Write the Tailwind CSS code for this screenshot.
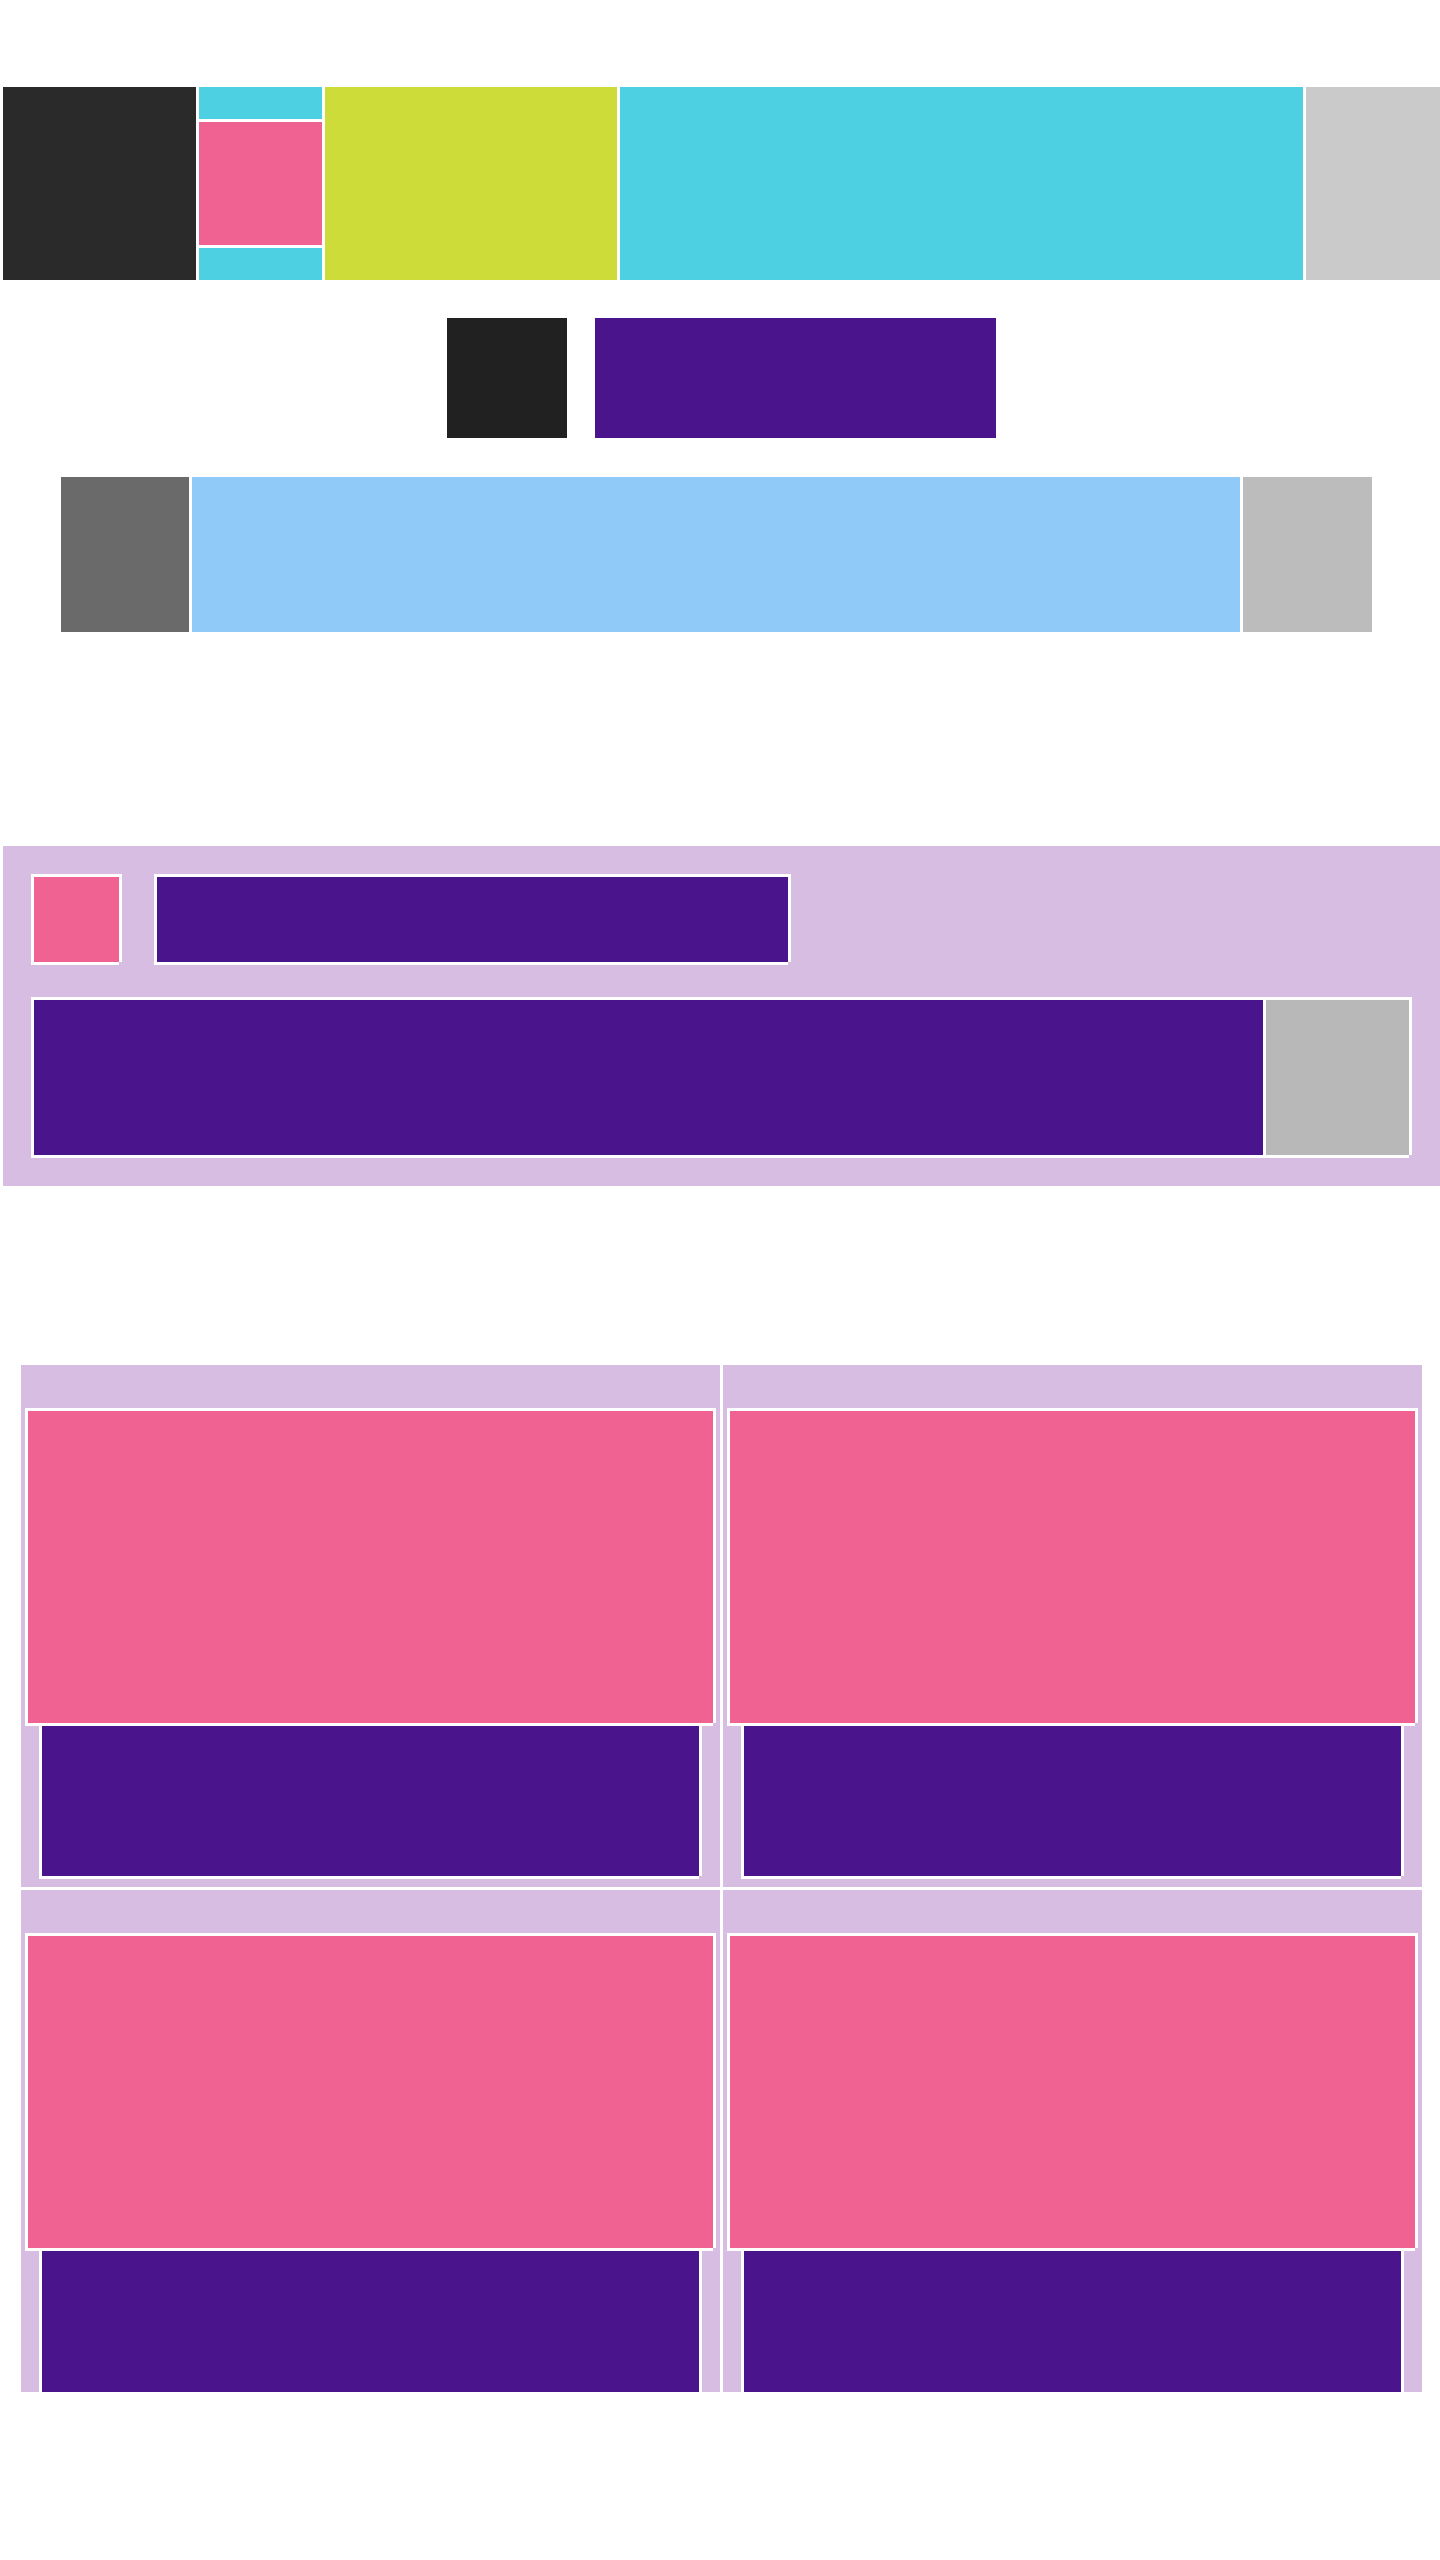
<!DOCTYPE html>
<html lang="en">
<head>
<meta charset="utf-8">
<meta name="viewport" content="width=device-width, initial-scale=1">
<title>Layout blocks</title>
<script src="https://cdn.jsdelivr.net/npm/@tailwindcss/browser@4"></script>
</head>
<body class="bg-white">
<header class="pt-[87px] pl-[3px]">
  <div class="flex h-[193px] gap-[3px]">
    <div class="w-[193px] shrink-0 bg-[#2a2a2a]"></div>
    <div class="flex w-[123px] shrink-0 flex-col gap-[3px]">
      <div class="flex-1 bg-[#4dd0e1]"></div>
      <div class="h-[123px] bg-[#f06292]"></div>
      <div class="flex-1 bg-[#4dd0e1]"></div>
    </div>
    <div class="w-[292px] shrink-0 bg-[#cddc39]"></div>
    <div class="flex-1 bg-[#4dd0e1]"></div>
    <div class="w-[134px] shrink-0 bg-[#cacaca]"></div>
  </div>
  <div class="mt-[38px] flex h-[120px] justify-center gap-7">
    <div class="w-[120px] bg-[#212121]"></div>
    <div class="w-[401px] bg-[#4a148c]"></div>
  </div>
  <div class="mt-[39px] mr-[68px] ml-[58px] flex h-[155px] gap-[3px]">
    <div class="w-32 bg-[#6a6a6a]"></div>
    <div class="flex-1 bg-[#90caf9]"></div>
    <div class="w-[129px] bg-[#bcbcbc]"></div>
  </div>
</header>
<main>
  <section class="mt-[214px] ml-[3px] bg-[#d7bde2] p-[31px]">
    <div class="flex h-[85px] gap-[38px]">
      <div class="w-[85px] bg-[#f06292] shadow-[-3px_-3px_white,3px_-3px_white,-3px_3px_white,3px_0_white,0_3px_white]"></div>
      <div class="w-[631px] bg-[#4a148c] shadow-[-3px_-3px_white,3px_-3px_white,-3px_3px_white,3px_0_white,0_3px_white]"></div>
    </div>
    <div class="mt-[38px] flex h-[155px] gap-[3px]">
      <div class="flex-1 bg-[#4a148c] shadow-[-3px_-3px_white,3px_-3px_white,-3px_3px_white,3px_0_white,0_3px_white]"></div>
      <div class="w-[143px] bg-[#b8b8b8] shadow-[-3px_-3px_white,3px_-3px_white,-3px_3px_white,3px_0_white,0_3px_white]"></div>
    </div>
  </section>
  <section class="mt-[179px] mr-[18px] mb-[168px] ml-[21px] grid max-h-[1027px] grid-cols-2 gap-[3px] overflow-hidden">
    <article class="h-[522px] bg-[#d7bde2] pt-[46px] pr-[7px] pl-[7px]">
      <div class="h-[312px] bg-[#f06292] shadow-[-3px_-3px_white,3px_-3px_white,-3px_3px_white,3px_0_white,0_3px_white]"></div>
      <div class="mx-[14px] mt-[3px] h-[150px] bg-[#4a148c] shadow-[-3px_0_white,3px_0_white,-3px_3px_white,0_3px_white]"></div>
    </article>
    <article class="h-[522px] bg-[#d7bde2] pt-[46px] pr-[7px] pl-[7px]">
      <div class="h-[312px] bg-[#f06292] shadow-[-3px_-3px_white,3px_-3px_white,-3px_3px_white,3px_0_white,0_3px_white]"></div>
      <div class="mx-[14px] mt-[3px] h-[150px] bg-[#4a148c] shadow-[-3px_0_white,3px_0_white,-3px_3px_white,0_3px_white]"></div>
    </article>
    <article class="h-[522px] bg-[#d7bde2] pt-[46px] pr-[7px] pl-[7px]">
      <div class="h-[312px] bg-[#f06292] shadow-[-3px_-3px_white,3px_-3px_white,-3px_3px_white,3px_0_white,0_3px_white]"></div>
      <div class="mx-[14px] mt-[3px] h-[150px] bg-[#4a148c] shadow-[-3px_0_white,3px_0_white,-3px_3px_white,0_3px_white]"></div>
    </article>
    <article class="h-[522px] bg-[#d7bde2] pt-[46px] pr-[7px] pl-[7px]">
      <div class="h-[312px] bg-[#f06292] shadow-[-3px_-3px_white,3px_-3px_white,-3px_3px_white,3px_0_white,0_3px_white]"></div>
      <div class="mx-[14px] mt-[3px] h-[150px] bg-[#4a148c] shadow-[-3px_0_white,3px_0_white,-3px_3px_white,0_3px_white]"></div>
    </article>
  </section>
</main>
</body>
</html>
